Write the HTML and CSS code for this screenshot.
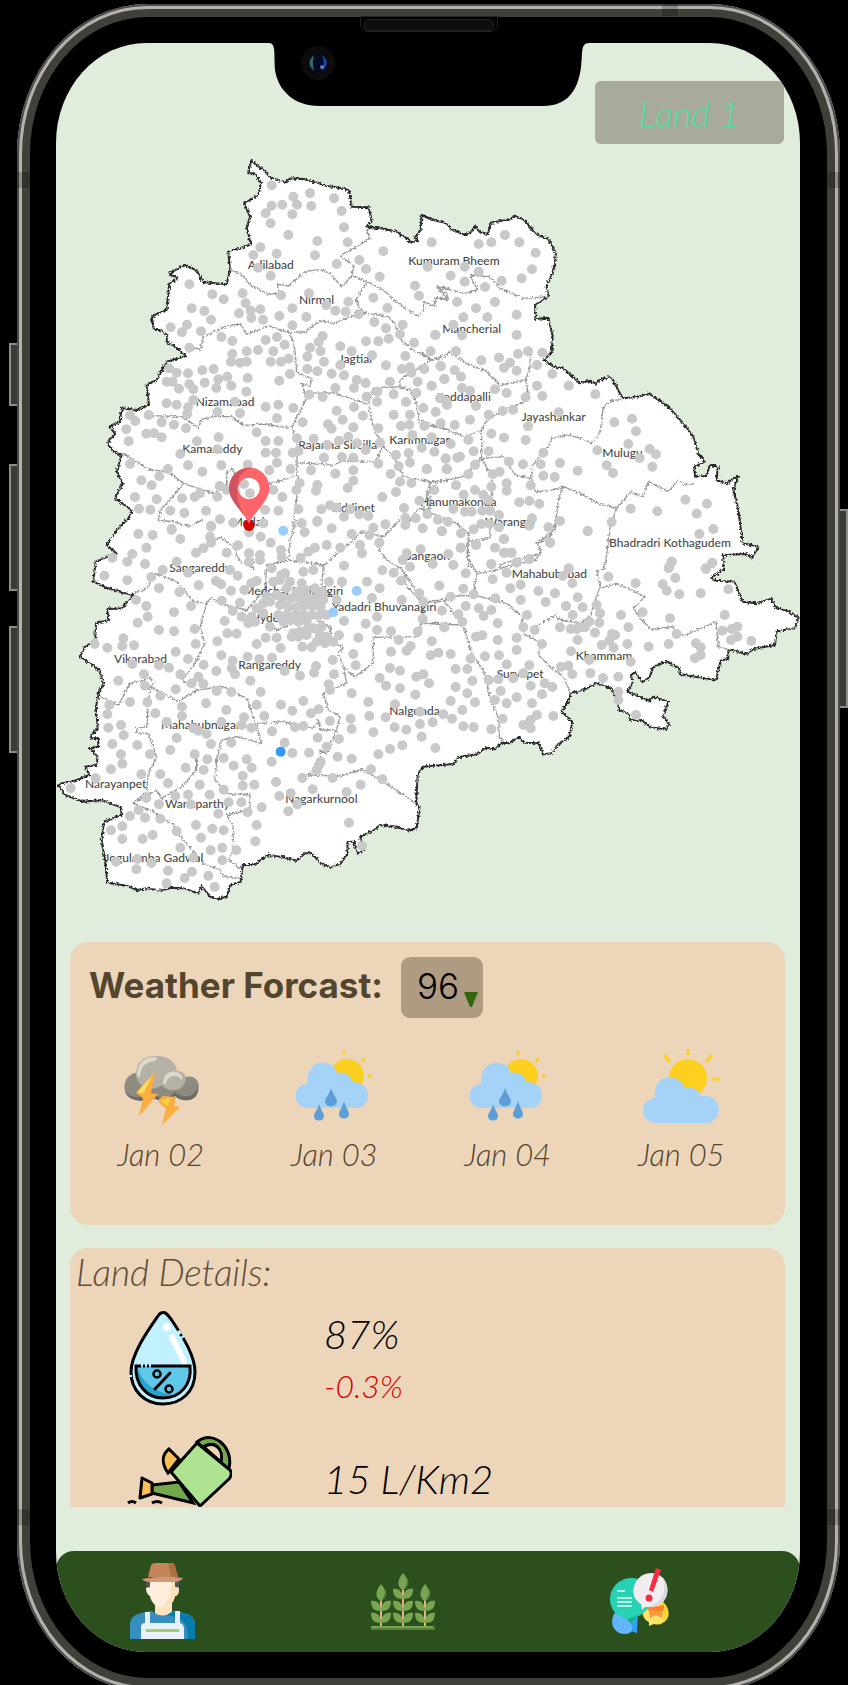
FILE: index.html
```html
<!DOCTYPE html>
<html lang="en">
<head>
<meta charset="utf-8">
<meta name="viewport" content="width=device-width, initial-scale=1">
<title>Farm land overview</title>
<link rel="stylesheet" href="styles.css">
</head>
<body>
<div class="stage">
<div class="phone">
  <span class="side-key mute"></span>
  <span class="side-key volume-up"></span>
  <span class="side-key volume-down"></span>
  <span class="side-key power"></span>
  <span class="band band-top"></span>
  <span class="band band-left"></span>
  <span class="band band-right"></span>
  <span class="band band-left-low"></span>
  <span class="band band-right-low"></span>
  <span class="speaker"></span>
  <svg class="notch" viewBox="0 0 320 65" aria-hidden="true">
    <path d="M0 0H320V1C311 1 314 12 312 25C309 49 298 64 274 64H50C26 64 9 49 6 28C5 12 7 1 0 1Z" fill="#000"/>
    <ellipse cx="49" cy="21" rx="17" ry="17" fill="#0c0c0d"/>
    <circle cx="49" cy="21" r="9" fill="#050a20"/>
    <path d="M45 13q-9 8 0 16q-2-8 0-16z" fill="#2d6a68"/>
    <path d="M53 13q9 8 0 16q4-8 0-16z" fill="#1450c8"/>
    <circle cx="53" cy="25" r="2" fill="#6c74b8"/>
  </svg>

  <main class="screen">
    <header class="top">
      <button class="land-button" type="button">Land 1</button>
    </header>

    <svg class="map" viewBox="18 0 2232 2280" role="img" aria-label="Telangana district map">
      <defs>
        <filter id="rough" x="-2%" y="-2%" width="104%" height="104%">
          <feTurbulence type="fractalNoise" baseFrequency="0.15" numOctaves="2" seed="4"/>
          <feDisplacementMap in="SourceGraphic" scale="14" xChannelSelector="R" yChannelSelector="G"/>
        </filter>
      </defs>
      <g filter="url(#rough)">
      <path class="state" d="M605 30L618 45L640 58L660 82L690 92L710 97L720 85L760 87L800 98L830 108L860 112L897 120L905 170L955 172L965 210L950 230L1000 236L1040 245L1070 265L1085 278L1103 272L1095 262L1112 240L1115 195L1150 210L1185 218L1205 238L1245 255L1262 248L1275 228L1288 245L1313 252L1323 218L1378 208L1395 198L1425 212L1455 250L1495 268L1518 310L1510 360L1490 410L1495 440L1455 465L1457 507L1495 503L1508 560L1505 605L1483 630L1510 650L1540 655L1590 700L1620 692L1635 702L1650 690L1682 680L1718 745L1765 740L1798 730L1860 775L1895 815L1930 860L1945 910L1965 935L1933 950L1935 980L1968 978L1980 945L2003 950L2000 990L2030 1000L2065 977L2050 1020L2065 1080L2078 1180L2125 1190L2105 1225L2090 1212L2020 1215L2020 1260L1985 1282L1995 1292L2053 1295L2078 1355L2120 1360L2165 1345L2175 1372L2210 1382L2246 1402L2235 1435L2180 1443L2175 1485L2110 1497L2090 1512L2035 1497L2035 1525L2012 1532L1998 1590L1890 1573L1888 1555L1850 1533L1808 1553L1800 1580L1778 1597L1755 1567L1743 1575L1748 1600L1730 1625L1798 1653L1810 1640L1855 1655L1840 1700L1858 1725L1845 1738L1800 1732L1775 1710L1740 1710L1735 1690L1708 1680L1702 1650L1685 1615L1638 1600L1600 1620L1562 1630L1555 1655L1535 1685L1567 1715L1558 1760L1525 1782L1505 1810L1480 1813L1465 1780L1425 1778L1405 1760L1380 1780L1355 1778L1335 1798L1310 1793L1280 1813L1225 1822L1210 1842L1118 1850L1103 1875L1098 1960L1108 1975L1100 2035L1070 2042L1040 2030L990 2025L970 2042L930 2060L935 2080L945 2095L925 2110L915 2090L912 2075L892 2075L893 2110L870 2143L840 2152L810 2138L785 2110L765 2110L740 2132L700 2122L655 2115L610 2145L578 2145L572 2195L540 2205L530 2240L500 2247L480 2240L455 2208L445 2230L400 2215L365 2213L330 2222L290 2215L260 2220L230 2207L172 2198L165 2130L155 2070L162 2015L215 1995L212 1972L155 1950L100 1955L45 1935L24 1903L80 1890L118 1875L105 1850L140 1845L143 1820L120 1795L145 1790L145 1765L122 1765L125 1755L143 1735L138 1670L148 1620L162 1605L150 1565L135 1550L90 1520L105 1490L135 1480L138 1420L175 1410L172 1378L215 1375L250 1335L225 1330L170 1313L130 1295L137 1235L200 1210L170 1185L190 1155L205 1135L240 1100L245 1080L195 1045L218 1000L200 965L215 915L190 905L172 880L195 850L178 830L210 815L215 775L260 780L297 765L290 705L320 690L350 635L408 618L375 590L350 575L352 555L330 540L312 540L305 500L325 490L350 480L358 400L382 385L358 370L405 345L440 362L460 397L530 403L540 360L535 305L603 283L590 235L600 200L583 160L625 135L633 100L615 70L593 70Z"/>
      <g class="district">
        <path d="M540 360L570 370L605 408L655 433L683 430L683 403L715 408L765 365L810 358L840 370L875 410L905 378L912 345L870 318L920 290L960 265L950 230M905 375L950 395L1000 420L1050 465L1105 498L1122 480L1120 455L1152 470L1158 443L1195 450L1190 430L1160 410L1200 415M950 395L918 450L930 480L950 490L1010 498L1035 520L1045 560L1085 598L1145 630L1180 625L1200 603M408 590L452 597L460 560L530 528L572 522L590 553L655 528L720 548L765 545L810 512L850 520L900 500L950 488M720 548L735 600L740 668L785 685L780 710L755 700L770 745L725 830L700 832L650 822L580 825L545 800L490 800L455 808L445 833L395 800L300 797M770 730L850 728L955 763L970 715L1050 710L1080 720L1100 760L1108 820L1200 840M1050 710L1050 690L1145 630M955 763L970 830L1000 890L1025 915L1045 940L1060 980L1140 995L1200 990M725 830L742 880L740 975L700 990L660 1000L640 1010M745 938L850 945L880 932L975 935L1000 890M215 908L260 935L300 960L355 965L400 1000L490 1030L530 1010L530 970L545 955L555 970M400 1000L360 1050L330 1080L325 1110L370 1115L420 1130L455 1110M745 975L740 1045L728 1130M1140 995L1140 1080L1105 1075L1075 1120"/>
        <g transform="translate(1110 120)"><path d="M385 320L310 325L240 295L208 260L150 255L172 300L130 310L50 290L85 330L45 325L45 350L10 335M0 485L35 510L90 488L150 525L200 545L240 585L317 570L330 530L330 485M317 570L325 610L305 640L260 655L200 690L185 720L135 740L0 690M185 720L185 805L250 800L285 855L335 865L335 830L385 770L395 745L440 735L485 745L515 760L540 730L550 650L575 632L608 628M185 805L215 860L215 930M335 865L345 905L390 902L430 890L480 910L535 940L590 955L630 908L670 920L685 875L745 905L775 870L790 885L822 880M430 890L415 930L405 1020L350 1060L365 1085L345 1110L240 1135M590 955L570 1010L558 1110L550 1140M185 805L130 860L30 880L10 960L110 1000L145 1030L145 1135M210 1005L210 1045L145 1055"/></g>
        <g transform="translate(0 1110)"><path d="M483 70L510 50L550 80L570 125L610 145L610 110M740 0L720 60L715 120L650 135L645 210L590 270L540 260L480 235L470 250L430 245L380 185L320 160L290 205L250 220M715 120L820 135L910 60L935 35L1000 50L1050 0M975 70L1010 120L1060 150L1070 200L1120 250L1180 240L1200 235M820 135L815 200L860 240M1120 250L1115 310L1105 350L970 352L970 430L915 470L880 440L865 400L880 380L845 370L840 320L780 290L680 330L650 310M1115 310L1200 310M470 250L450 320L465 370L430 440L395 480L440 510L385 545L330 515L300 500L290 620L260 625L260 640L295 640L320 710L295 760L290 815L250 850M150 530L205 555L240 490L300 475L310 490L300 505M440 510L520 500L590 535L620 620L635 670L560 650L515 660L500 720L495 780L530 820L600 825L600 870L530 885L550 920L550 990L535 1020L570 1045M620 610L700 605L790 625L805 600L810 630L860 630L870 590L835 570L820 520L890 490L880 440M440 710L440 750L395 800L335 835L320 810L250 850L310 875L370 915L400 960L460 1030L510 1050L520 1070L570 1075M860 630L830 700L810 690L815 740L770 765L870 768L935 748L1000 785L1098 850"/></g>
        <g transform="translate(1050 1110)"><path d="M0 140L70 245L130 240L150 230L220 225L320 250L365 290L370 340L425 370L415 405L450 440L490 470L512 520M130 240L170 290L190 315L215 400L250 450L270 530L297 600L298 650L310 665M190 315L60 310M405 320L465 285L480 300L540 310L570 290L600 200L590 155L615 145M600 205L650 190L735 230L700 265L720 295L755 328L815 320L850 348L948 305L955 380L990 390M205 65L200 110L230 160L220 225M230 160L290 150L310 130L420 100L415 70L450 50L470 0"/></g>
      </g>
      </g>
      <g class="place">
        <text x="593" y="356">Adilabad</text><text x="747" y="463">Nirmal</text><text x="1075" y="344">Kumuram Bheem</text><text x="1177" y="548">Mancherial</text><text x="866" y="640">Jagtial</text><text x="437" y="769">Nizamabad</text><text x="1160" y="753">Peddapalli</text><text x="1415" y="814">Jayashankar</text><text x="397" y="910">Kamareddy</text><text x="745" y="896">Rajanna Sircilla</text><text x="1018" y="882">Karimnagar</text><text x="1657" y="922">Mulugu</text><text x="845" y="1087">Siddipet</text><text x="1110" y="1069">Hanumakonda</text><text x="1305" y="1128">Warangal</text><text x="545" y="1129">Medak</text><text x="1677" y="1192">Bhadradri Kothagudem</text><text x="358" y="1265">Sangareddy</text><text x="1070" y="1230">Jangaon</text><text x="1385" y="1283">Mahabubabad</text><text x="580" y="1335">Medchal Malkajgiri</text><text x="846" y="1383">Yadadri Bhuvanagiri</text><text x="603" y="1417">Hyderabad</text><text x="192" y="1538">Vikarabad</text><text x="565" y="1557">Rangareddy</text><text x="1018" y="1696">Nalgonda</text><text x="1340" y="1585">Suryapet</text><text x="1577" y="1530">Khammam</text><text x="333" y="1738">Mahabubnagar</text><text x="105" y="1915">Narayanpet</text><text x="345" y="1973">Wanaparthy</text><text x="706" y="1960">Nagarkurnool</text><text x="163" y="2137">Jogulamba Gadwal</text>
      </g>
      <g class="stations">
        <path d="M665 106h0M730 140h0M780 130h0M852 145h0M665 167h0M697 164h0M741 164h0M784 168h0M875 183h0M647 190h0M727 193h0M662 220h0M882 232h0M715 255h0M802 273h0M893 277h0M631 292h0M680 311h0M610 315h0M795 316h0M624 353h0M860 342h0M662 377h0M1000 304h0M928 330h0M948 357h0M989 380h0M1145 277h0M1133 350h0M1095 407h0M1107 437h0M970 443h0M1012 474h0M418 403h0M487 433h0M521 448h0M578 430h0M587 460h0M425 475h0M463 483h0M483 509h0M411 524h0M362 532h0M396 547h0M453 544h0M567 490h0M602 482h0M631 478h0M604 504h0M639 509h0M688 498h0M693 436h0M777 430h0M727 475h0M769 501h0M727 526h0M829 466h0M856 482h0M887 485h0M895 455h0M926 493h0M973 516h0M1008 535h0M1058 524h0M1050 553h0M1016 566h0M985 574h0M948 574h0M1092 578h0M1156 555h0M1142 604h0M1066 618h0M514 561h0M547 573h0M647 570h0M681 561h0M704 584h0M590 604h0M624 600h0M547 612h0M670 604h0M543 635h0M570 638h0M590 635h0M662 635h0M693 635h0M716 626h0M418 593h0M818 558h0M806 576h0M780 593h0M812 604h0M772 620h0M822 635h0M871 589h0M905 604h0M966 616h0M871 645h0M1008 646h0M772 657h0M802 664h0M845 671h0M882 676h0M720 672h0M357 655h0M380 668h0M414 670h0M457 661h0M491 657h0M350 695h0M368 695h0M387 716h0M418 703h0M430 718h0M464 698h0M505 688h0M532 680h0M499 714h0M544 707h0M593 684h0M589 725h0M688 692h0M856 714h0M920 690h0M947 699h0M912 714h0M1020 695h0M1056 657h0M1080 652h0M1084 668h0M1123 657h0M1172 649h0M1103 695h0M1145 707h0M1183 688h0M350 760h0M380 764h0M430 750h0M414 772h0M412 792h0M555 755h0M502 786h0M570 790h0M647 771h0M685 764h0M681 805h0M730 774h0M778 734h0M818 741h0M950 740h0M982 725h0M981 755h0M1031 733h0M1099 729h0M912 771h0M860 782h0M939 797h0M878 809h0M910 832h0M758 817h0M834 823h0M845 836h0M1068 756h0M1031 794h0M1080 794h0M1120 774h0M1157 786h0M1172 744h0M1190 756h0M1053 828h0M1078 824h0M1123 828h0M1172 820h0M240 795h0M256 813h0M296 795h0M229 838h0M335 817h0M372 824h0M408 835h0M236 874h0M289 851h0M312 850h0M335 862h0M441 874h0M506 862h0M620 847h0M647 873h0M685 873h0M741 865h0M791 866h0M985 835h0M895 860h0M867 872h0M832 885h0M921 880h0M947 900h0M990 878h0M1087 855h0M1145 862h0M1115 893h0M1153 905h0M391 912h0M414 946h0M502 898h0M647 908h0M678 908h0M728 908h0M745 904h0M681 938h0M593 944h0M514 946h0M457 965h0M354 957h0M328 979h0M274 991h0M305 1006h0M240 942h0M822 923h0M876 921h0M910 923h0M985 941h0M1038 915h0M1076 909h0M1080 938h0M1046 949h0M783 961h0M910 961h0M856 971h0M910 992h0M893 1014h0M1022 972h0M1131 957h0M1187 925h0M1190 957h0M658 961h0M722 957h0M749 999h0M739 1020h0M802 1005h0M798 1022h0M670 1020h0M697 1041h0M255 1041h0M320 1048h0M267 1076h0M301 1079h0M361 1082h0M403 1089h0M468 1082h0M396 1045h0M434 1041h0M450 1030h0M502 1040h0M509 1008h0M530 1020h0M685 1082h0M645 1080h0M745 1078h0M814 1078h0M840 1066h0M860 1073h0M901 1078h0M928 1093h0M955 1098h0M882 1100h0M802 1113h0M997 1041h0M1038 1026h0M1050 995h0M1084 999h0M1062 1074h0M1108 1052h0M1153 1020h0M1097 1105h0M1066 1103h0M1132 1093h0M1164 1109h0M1006 1123h0M970 1133h0M510 1108h0M483 1127h0M550 1118h0M640 1120h0M365 1137h0M755 1120h0M582 1002h0M600 1030h0"/>
        <g transform="translate(1110 120)"><path d="M176 162h0M214 157h0M255 135h0M298 157h0M347 188h0M336 238h0M305 265h0M245 272h0M176 245h0M134 230h0M92 257h0M134 275h0M195 291h0M111 336h0M225 336h0M168 355h0M130 382h0M202 382h0M290 374h0M100 404h0M126 436h0M290 435h0M108 484h0M184 511h0M237 503h0M270 518h0M252 533h0M290 542h0M294 492h0M324 484h0M367 488h0M351 525h0M397 552h0M351 587h0M446 587h0M367 618h0M317 622h0M526 613h0M260 609h0M225 598h0M150 602h0M126 594h0M123 560h0M104 541h0M62 529h0M73 567h0M35 587h0M46 435h0M60 625h0M81 645h0M168 648h0M206 674h0M248 663h0M279 659h0M150 689h0M104 705h0M416 667h0M324 709h0M317 750h0M252 743h0M214 731h0M145 750h0M92 762h0M161 784h0M206 784h0M120 800h0M112 803h0M77 807h0M81 838h0M20 838h0M267 815h0M309 823h0M370 788h0M362 823h0M420 819h0M404 861h0M370 857h0M473 842h0M532 781h0M583 697h0M636 686h0M648 724h0M625 762h0M659 804h0M689 777h0M708 793h0M697 830h0M560 826h0M579 849h0M165 825h0M145 853h0M218 853h0M239 845h0M260 880h0M214 890h0M260 902h0M332 886h0M108 886h0M165 900h0M131 914h0M190 915h0M205 930h0M298 937h0M328 933h0M358 941h0M100 957h0M135 965h0M155 965h0M187 962h0M210 962h0M237 975h0M336 985h0M420 993h0M385 1012h0M328 1007h0M184 1002h0M209 1002h0M237 1012h0M84 995h0M66 1024h0M123 1030h0M161 1018h0M252 1047h0M168 1065h0M225 1073h0M252 1088h0M274 1088h0M123 1073h0M390 1058h0M503 1024h0M575 996h0M632 956h0M712 964h0M796 929h0M861 941h0M830 971h0M880 1017h0M838 1032h0M755 1115h0M747 1132h0M876 1120h0M857 1135h0M214 1123h0M290 1117h0M328 1107h0M446 1135h0"/></g>
        <g transform="translate(0 1110)"><path d="M265 42h0M308 45h0M365 30h0M391 57h0M289 83h0M247 102h0M232 125h0M187 114h0M285 132h0M163 167h0M232 181h0M304 171h0M338 150h0M380 125h0M414 158h0M327 205h0M388 216h0M446 196h0M483 20h0M480 50h0M483 68h0M460 85h0M438 98h0M530 98h0M564 76h0M632 50h0M662 68h0M693 90h0M597 37h0M597 125h0M630 105h0M695 110h0M597 100h0M630 120h0M665 145h0M694 165h0M540 150h0M563 167h0M498 183h0M514 193h0M543 212h0M515 242h0M570 248h0M583 210h0M604 190h0M620 183h0M258 240h0M289 258h0M293 290h0M263 308h0M372 277h0M423 258h0M327 330h0M372 334h0M434 327h0M524 303h0M548 273h0M575 290h0M595 310h0M220 355h0M217 378h0M252 376h0M134 372h0M172 383h0M437 372h0M502 364h0M532 340h0M560 341h0M620 372h0M647 353h0M680 353h0M377 395h0M414 417h0M247 432h0M327 436h0M357 443h0M461 434h0M499 453h0M514 406h0M548 422h0M545 445h0M555 463h0M593 410h0M628 417h0M666 413h0M692 384h0M704 453h0M282 463h0M285 497h0M205 482h0M391 463h0M445 470h0M425 490h0M460 492h0M377 508h0M331 527h0M292 547h0M240 546h0M500 513h0M544 516h0M601 482h0M632 516h0M178 555h0M172 583h0M316 580h0M396 560h0M396 588h0M468 550h0M529 570h0M582 592h0M350 606h0M514 606h0M175 623h0M213 615h0M221 646h0M604 623h0M575 615h0M430 625h0M445 632h0M470 642h0M620 554h0M643 588h0M693 554h0M187 672h0M262 675h0M361 690h0M380 654h0M483 672h0M544 668h0M213 703h0M217 731h0M300 703h0M434 703h0M472 718h0M461 750h0M521 714h0M407 743h0M183 748h0M274 763h0M331 763h0M137 775h0M354 790h0M62 805h0M449 794h0M551 737h0M590 718h0M605 743h0M578 767h0M578 797h0M613 794h0M665 725h0M704 668h0M727 699h0M777 698h0M666 634h0M735 622h0M760 618h0M688 828h0M722 820h0M678 786h0M757 774h0M788 808h0M848 774h0M807 735h0M800 750h0M812 725h0M830 680h0M803 653h0M289 834h0M327 853h0M376 828h0M414 824h0M479 824h0M422 853h0M521 809h0M536 847h0M574 847h0M593 877h0M505 881h0M635 862h0M715 874h0M742 853h0M266 870h0M240 888h0M285 893h0M331 896h0M380 934h0M183 931h0M217 919h0M217 957h0M278 957h0M308 945h0M438 915h0M487 926h0M521 931h0M453 953h0M391 983h0M482 991h0M517 983h0M559 991h0M517 1021h0M620 915h0M616 964h0M262 1017h0M198 1025h0M304 1029h0M430 1013h0M259 1048h0M354 1052h0M426 1055h0M404 1074h0M475 1067h0M350 1090h0M494 1101h0M936 978h0M897 908h0M932 794h0M890 816h0M997 778h0M963 748h0M905 716h0M863 710h0M867 657h0M840 603h0M905 627h0M902 596h0M970 637h0M985 703h0M1020 687h0M1057 676h0M1115 650h0M1156 684h0M1110 612h0M1148 607h0M1069 629h0M1034 622h0M1007 592h0M958 588h0M955 546h0M905 520h0M840 510h0M836 493h0M852 463h0M917 436h0M910 402h0M848 420h0M750 467h0M792 458h0M798 438h0M760 543h0M727 572h0M783 580h0M806 568h0M989 474h0M1008 497h0M1050 505h0M1096 524h0M1137 490h0M1120 463h0M1099 470h0M1050 452h0M1020 444h0M1023 395h0M1035 553h0M1110 575h0M925 353h0M867 346h0M882 303h0M947 311h0M981 290h0M981 330h0M1023 334h0M1046 360h0M1103 335h0M1118 297h0M1070 392h0M1082 378h0M1145 364h0M1142 406h0M1165 398h0M1183 322h0M989 205h0M966 234h0M951 185h0M997 151h0M1031 158h0M1053 182h0M1055 240h0M1108 220h0M1120 245h0M876 185h0M837 185h0M860 240h0M882 137h0M930 75h0M936 100h0M988 68h0M958 45h0M905 42h0M871 83h0M830 75h0M795 83h0M775 95h0M752 113h0M764 37h0M802 5h0M845 25h0M1066 15h0M1118 25h0M1175 33h0M1070 100h0M1112 88h0M1058 120h0M1080 140h0M1148 132h0M1168 197h0M1176 272h0M760 155h0M790 150h0M690 180h0M670 185h0M705 160h0M720 185h0M755 190h0M710 205h0M740 215h0M765 210h0M795 205h0M815 215h0M650 230h0M680 225h0M700 235h0M725 235h0M750 235h0M775 235h0M800 235h0M820 240h0M640 250h0M660 245h0M690 255h0M715 260h0M740 262h0M765 258h0M790 258h0M812 262h0M830 285h0M620 265h0M640 280h0M605 290h0M615 305h0M685 285h0M710 285h0M735 285h0M760 285h0M785 285h0M810 285h0M700 305h0M720 300h0M745 305h0M770 305h0M660 320h0M730 340h0M750 335h0M770 330h0M790 325h0M815 320h0M725 350h0M745 350h0M770 345h0M810 345h0M830 350h0M800 365h0M825 370h0M850 365h0M757 380h0M785 382h0"/></g>
        <g transform="translate(1050 1110)"><path d="M145 102h0M160 135h0M197 160h0M182 83h0M228 75h0M312 57h0M315 98h0M335 98h0M274 132h0M350 128h0M388 118h0M320 158h0M278 178h0M331 205h0M362 194h0M190 206h0M152 230h0M221 223h0M286 235h0M362 240h0M415 213h0M465 220h0M437 246h0M488 168h0M506 147h0M517 190h0M533 232h0M498 258h0M548 262h0M518 285h0M590 255h0M600 280h0M598 308h0M381 285h0M568 305h0M555 322h0M540 322h0M530 327h0M512 327h0M480 322h0M404 330h0M370 322h0M585 338h0M625 170h0M663 285h0M707 190h0M728 277h0M815 125h0M806 145h0M826 174h0M788 193h0M800 212h0M838 223h0M902 220h0M937 128h0M918 147h0M563 33h0M450 68h0M985 208h0M974 285h0M810 295h0M1012 320h0M995 327h0M967 332h0M1012 350h0M993 360h0M1054 363h0M830 342h0M806 372h0M888 370h0M902 382h0M902 405h0M885 415h0M746 380h0M682 372h0M685 322h0M636 342h0M645 345h0M628 362h0M605 375h0M641 383h0M533 360h0M513 394h0M426 372h0M350 353h0M350 390h0M293 310h0M293 360h0M228 350h0M247 346h0M236 265h0M251 288h0M274 270h0M197 258h0M175 283h0M187 305h0M133 322h0M152 402h0M212 416h0M255 409h0M297 406h0M320 433h0M388 436h0M167 447h0M202 447h0M217 482h0M167 501h0M202 520h0M302 513h0M266 480h0M340 475h0M295 478h0M370 460h0M392 497h0M434 490h0M457 501h0M350 532h0M426 523h0M320 550h0M285 540h0M225 547h0M396 550h0M152 543h0M187 570h0M156 596h0M130 583h0M190 619h0M221 622h0M274 628h0M308 596h0M411 585h0M392 600h0M392 625h0M370 615h0M460 588h0M483 440h0M505 437h0M517 463h0M571 460h0M609 474h0M655 470h0M692 425h0M568 420h0M655 515h0M655 540h0M708 585h0"/></g>
        <path class="light" d="M700 1142h0M920 1323h0M850 1387h0"/>
        <path class="blue" d="M692 1805h0"/>
        <path class="red" d="M597 1126h0"/>
      </g>
      <g class="pin">
        <path fill="#ff646a" fill-rule="evenodd" d="M597 1122C582 1085 537 1055 537 1014A60 61 0 0 1 658 1014C658 1055 612 1085 597 1122ZM597 983A32 32 0 1 0 597 1047A32 32 0 1 0 597 983Z"/>
        <path fill="#d1535f" d="M597 1122C582 1085 537 1055 537 1014A60 61 0 0 1 603 954C580 962 568 976 563 1000C555 1045 572 1080 597 1122Z"/>
      </g>
    </svg>

    <section class="card weather">
      <div class="weather-head">
        <h1>Weather Forcast:</h1>
        <button class="score" type="button">96<svg class="fall" viewBox="0 0 14 15" aria-hidden="true"><path d="M0 0H14L8 15H6Z" fill="#33650c"/></svg></button>
      </div>
      <ul class="days">
        <li>
          <svg viewBox="0 0 76 76" aria-hidden="true">
            <path fill="#8f8b80" d="M12 24C-2 27-3 50 14 51C22 52 25 47 31 49C37 54 46 51 52 46C58 53 69 54 74 45C79 34 73 25 62 28Z"/>
            <path fill="#706b62" d="M2 42C7 50 20 50 27 43C36 51 46 50 52 43C62 51 72 48 75 37C76 46 71 52 63 51C58 51 55 50 52 47C46 53 36 52 30 49C21 54 6 53 2 42Z"/>
            <path fill="#b5b1a5" d="M13 27C13 12 22 6 34 7C46 7 53 14 54 22C65 22 65 34 58 39C51 43 42 41 39 36C29 44 15 38 13 27Z"/>
            <path fill="#dbd8cd" d="M14 27C14 14 22 7 33 8C36 12 29 12 25 14C18 17 18 22 17 28ZM40 35C40 25 48 20 56 24C60 26 60 31 58 31C55 24 44 26 43 35Z"/>
            <path fill="#ffad3f" d="M31 24L32 25L28 44L35 45L16 67L20 49L13 44Z"/><path fill="#ffdc55" d="M30 26L14 43L20 45Z"/>
            <path fill="#ffad3f" d="M36 50L40 47L53 48L51 57L57 58L39 76L43 60L36 54Z"/><path fill="#ffd044" d="M37 52L48 48L44 57Z"/>
          </svg>
          <span>Jan 02</span>
        </li>
        <li>
          <svg viewBox="0 0 76 76" aria-hidden="true">
            <g id="rain">
              <path d="M48 2V6M69 9L66 13M72 27H76" stroke="#fdcf1e" stroke-width="2.5"/>
              <circle cx="51" cy="27" r="17" fill="#fdcf1e"/>
              <path fill="#a4d3f7" d="M12 59A12 12 0 0 1 11 35C10 8 37 9 41 24C49 22 55 27 56 33C77 32 76 59 60 59Z"/>
              <path fill="#5d9ed7" d="M35 39C38 47 41 50 41 52C41 59 29 59 29 52C29 50 33 46 35 39ZM23 55C25 61 28 64 28 67C28 73 18 73 18 67C18 64 21 62 23 55ZM48 52C50 59 53 62 53 65C53 71 43 71 43 65C43 62 46 59 48 52Z"/>
            </g>
          </svg>
          <span>Jan 03</span>
        </li>
        <li>
          <svg viewBox="0 0 76 76" aria-hidden="true"><use href="#rain"/></svg>
          <span>Jan 04</span>
        </li>
        <li>
          <svg viewBox="0 0 76 76" aria-hidden="true">
            <path d="M45 0V6M21 6L27 13M69 6L63 13M69 30H76" stroke="#fdcf1e" stroke-width="3"/>
            <circle cx="45" cy="29" r="19" fill="#fdcf1e"/>
            <path fill="#a4d3f7" d="M15 74C-5 74-4 50 12 49C9 24 36 23 42 39C50 37 57 42 57 47C82 44 80 74 63 74Z"/>
          </svg>
          <span>Jan 05</span>
        </li>
      </ul>
    </section>

    <section class="card details">
      <h2>Land Details:</h2>
      <div class="metric">
        <svg class="drop" viewBox="0 0 68 95" aria-hidden="true">
          <path fill="#c1f1ff" stroke="#000" stroke-width="3" d="M34 1.500C37 1 40 5 44 11C56 29 66 46 66 61C66 81 52 93 34 93C16 93 2 80 2 61C2 43 20 18 29 5C31 2 32 1.500 34 1.500Z"/>
          <path fill="#5fc8e8" d="M7 55H61C63 74 51 87 34 87C17 87 6 73 7 55Z"/>
          <path fill="#2ba3cb" d="M9 58C14 73 27 82 46 84C31 90 5 83 9 58Z"/>
          <path fill="none" stroke="#000" stroke-width="3" d="M22 55H61C63 74 51 87 34 87C17 87 6 73 7 55H12"/>
          <path d="M14 55H16M18 55H20" stroke="#000" stroke-width="3"/>
          <path d="M26 78L41 62" stroke="#000" stroke-width="3" stroke-linecap="round"/>
          <circle cx="28" cy="63" r="3.500" fill="none" stroke="#000" stroke-width="2.500"/><circle cx="40" cy="78" r="3.500" fill="none" stroke="#000" stroke-width="2.500"/>
          <circle cx="38" cy="16" r="4" fill="#fff"/><path d="M43 26L55 50" stroke="#fff" stroke-width="6" stroke-linecap="round"/>
          <path d="M49 20L54 27" stroke="#c1f1ff" stroke-width="4"/><circle cx="52" cy="24" r="1.500"/>
          <path d="M0 65H3" stroke="#c1f1ff" stroke-width="2"/>
        </svg>
        <p class="values"><span>87%</span><span class="change">-0.3%</span></p>
      </div>
      <div class="metric">
        <svg class="can" viewBox="0 0 106 90" aria-hidden="true">
          <path fill="#72a94f" stroke="#000" stroke-width="3" d="M71 8C87-5 108 13 103 34L97 37L92 27C98 12 88 7 76 13Z"/>
          <path fill="#ecd5b9" stroke="#000" stroke-width="3" d="M78 13C88 6 98 15 95 28Z"/>
          <path fill="#ffbd55" stroke="#000" stroke-width="3" d="M43 15L53 25L42 39C36 30 35 21 43 15Z"/>
          <path fill="#72a94f" stroke="#000" stroke-width="3" d="M26 51L53 48L67 69L26 59Z"/>
          <path fill="#ffbd55" stroke="#000" stroke-width="3" stroke-linejoin="round" d="M16 44L26 49V60L14 64Z"/>
          <path fill="#aee491" stroke="#000" stroke-width="3" stroke-linejoin="round" d="M71 9L104 36Q107 40 103 45L74 72L45 38Z"/>
          <path d="M2 69Q6 66 10 69M26 69Q31 66 36 69" fill="none" stroke="#000" stroke-width="3"/>
        </svg>
        <p class="values"><span>15 L/Km2</span></p>
      </div>
    </section>

    <nav class="tabs" aria-label="Main">
      <a href="#profile" aria-label="Profile">
        <svg width="66" height="76" viewBox="0 0 66 76" aria-hidden="true">
          <path fill="#fee2c0" d="M25 40H42V53H25Z"/>
          <path fill="#368fbe" d="M0 76V62C0 52 8 50 22 48Q33 57 43 48C58 50 65 52 65 62V76Z"/>
          <path fill="#087dad" d="M43 48C58 50 65 52 65 62V76H58C58 59 53 55 37 52Z"/>
          <path fill="#52545e" d="M16 17H49V26H16Z"/>
          <path fill="#ffeedb" d="M20 17H45V24L49 25Q49 33 45 33C44 40 38 45 33 45C27 45 21 40 20 33Q16 31 16 25L20 24Z"/>
          <path fill="#ffe0bb" d="M41 18H45V24L49 25Q49 33 45 33C44 40 38 44 32 44C41 38 41 28 41 18Z"/>
          <path fill="#c4855b" d="M21 2Q22 0 26 0H40Q44 0 45 3L48 14H18Z"/>
          <path fill="#ad6e42" d="M38 0H42Q45 0 45 3L48 14H41Z"/>
          <path fill="#d29979" d="M12 16Q33 12 53 15Q50 19 44 19H21Q14 19 12 16Z"/>
          <path fill="#e9f1fd" d="M15 49H20V60H45V48H50V60Q54 61 54 66V76H11V64Q11 60 15 60Z"/>
          <path d="M17 67.500H48" stroke="#a2ce6c" stroke-width="3" stroke-linecap="round"/>
        </svg>
      </a>
      <a href="#crops" aria-label="Crops">
        <svg width="64" height="58" viewBox="0 0 64 58" aria-hidden="true">
          <path d="M10 26V54M32 16V54M54 26V54" stroke="#efae8a" stroke-width="2"/>
          <g fill="#78a650"><path id="bud" d="M10 12C17 20 15 27 10 29C5 27 3 20 10 12Z"/><use href="#bud" x="44"/><path d="M32 1C39 9 37 16 32 18C27 16 25 9 32 1Z"/>
          <path id="leaf" d="M0 29C7 28 10 33 10 39C3 39 0 36 0 29ZM20 29C13 28 10 33 10 39C17 39 20 36 20 29Z"/>
          <use href="#leaf" y="12"/><use href="#leaf" x="22"/><use href="#leaf" x="22" y="12"/><use href="#leaf" x="22" y="-12"/><use href="#leaf" x="44"/><use href="#leaf" x="44" y="12"/></g>
          <path fill="#507a3c" d="M14 16C17 22 15 27 10 29C14 24 14 21 14 16ZM58 16C61 22 59 27 54 29C58 24 58 21 58 16ZM36 5C39 11 37 16 32 18C36 13 36 10 36 5Z"/>
          <rect y="54" width="64" height="4" rx="1" fill="#56813d"/><rect y="54" width="62" height="2" rx="1" fill="#78a650"/>
        </svg>
      </a>
      <a href="#messages" aria-label="Messages">
        <svg width="60" height="67" viewBox="0 0 60 67" aria-hidden="true">
          <path fill="#64b5ff" d="M8 41C-2 50 1 66 15 66Q20 66 22 63L27 65V46Z"/><path fill="#31a3fb" d="M7 42H28L27 65L22 63C23 53 17 50 5 45Z"/>
          <path fill="#ffd62e" d="M49 31C61 38 62 51 51 56Q48 57 44 56L39 58V54C32 51 32 44 32 41Z"/><path fill="#ffe56b" d="M34 43L52 39Q58 50 50 55Q46 57 43 55L39 58V54C34 51 34 47 34 43Z"/>
          <path fill="#ff9a40" d="M38 38L54 39L52 50L46 47L40 50Z"/><path fill="#ff8427" d="M37 40L54 37V42Q48 44 38 42Z"/>
          <path fill="#27d1b4" d="M20 10C45 8 48 40 27 49L21 56L17 51C-8 46-4 12 20 10Z"/><path fill="#20aa98" d="M21 56L17 51Q36 46 40 38Q35 45 27 49Z"/>
          <path fill="#f0eef1" d="M41 5C63 5 63 39 41 39H35L32 42L31 36C16 27 25 5 41 5Z"/><path fill="#d9d7df" d="M54 12C63 25 53 40 36 39C51 36 56 27 54 12Z"/>
          <path d="M7 23H15M7 30H22M7 34H22M7 38H22" stroke="#baf1e6" stroke-width="2"/>
          <path fill="#fb2a43" d="M46 0L51 2L43 24L39 22Z"/><circle cx="39" cy="30" r="3.500" fill="#fb2a43"/>
        </svg>
      </a>
    </nav>
  </main>
</div>
</div>
</body>
</html>
```
FILE: styles.css
```css
* { box-sizing: border-box; }

body {
  margin: 0;
  background: #000;
  color: #000;
  font-family: Lato, "Open Sans", sans-serif;
}

.stage {
  height: 100vh;
  overflow: hidden;
}

/* Handset */
.phone {
  position: relative;
  margin: 4px 8px 0 17px;
  padding: 39px 40px 39px 39px;
  border-radius: 130px / 150px;
  background: #000;
  box-shadow: inset 0 0 0 2px #4a4a48, inset 0 0 0 5px #b4b1ac, inset 0 0 0 13px #403f3a;
}

.side-key {
  position: absolute;
  left: -8px;
  width: 8px;
  border: 2px solid #8e8c89;
  border-right: 0;
  background: #3b3a37;
}
.mute { top: 339px; height: 63px; }
.volume-up { top: 460px; height: 127px; }
.volume-down { top: 622px; height: 127px; }
.power {
  top: 505px;
  left: auto;
  right: -8px;
  height: 199px;
  border: 2px solid #8e8c89;
  border-left: 0;
}

.band { position: absolute; background: rgba(0, 0, 0, .2); }
.band-top { top: 0; right: 162px; width: 16px; height: 12px; }
.band-left, .band-left-low { left: 0; width: 13px; height: 16px; }
.band-right, .band-right-low { right: 0; width: 13px; height: 16px; }
.band-left, .band-right { top: 168px; }
.band-left-low, .band-right-low { top: 1505px; }

.speaker {
  position: absolute;
  top: 12px;
  left: calc(50% - 69px);
  width: 138px;
  height: 16px;
  border: 1px solid #222;
  border-radius: 0 0 8px 8px;
  background: #000;
}
.speaker::after {
  content: "";
  display: block;
  height: 10px;
  margin: 2px 3px;
  border: 1px solid #242424;
  border-radius: 5px;
  background: #0e0e0e;
}

.notch {
  position: absolute;
  z-index: 1;
  top: 38px;
  left: calc(50% - 160px);
  width: 320px;
  height: 65px;
}

/* Screen */
.screen {
  display: flex;
  flex-direction: column;
  overflow: hidden;
  border-radius: 90px / 100px;
  background: #e0ecdc;
}

.top {
  display: flex;
  justify-content: flex-end;
  padding: 38px 16px 6px;
}

.land-button {
  width: 189px;
  height: 63px;
  border: 0;
  border-radius: 6px;
  background: #a8aa9b;
  color: #4fe09b;
  font: italic 300 36px Lato, sans-serif;
}

.map { display: block; width: 100%; height: auto; }
.state { fill: #fff; stroke: #2b2b2b; stroke-width: 6; stroke-linejoin: round; }
.district { fill: none; stroke: #999; stroke-width: 4; stroke-linejoin: round; }
.place { fill: #4a4a4a; font-family: Lato, sans-serif; font-size: 36px; font-weight: 500; }
.stations { fill: none; stroke: #c9c9c9; stroke-width: 30; stroke-linecap: round; }
.light { stroke: #99ccff; }
.blue { stroke: #3399ff; }
.red { stroke: #d40000; stroke-width: 34; }

.card {
  margin: 0 15px 0 14px;
  border-radius: 18px;
  background: #ecd5b9;
}

.weather { margin-top: 32px; padding: 15px 14px 52px; }

.weather-head { display: flex; align-items: flex-start; gap: 18px; padding-left: 5px; }

h1 {
  margin: 0;
  color: #54452f;
  font: 700 35px/56px Inter, sans-serif;
}

.score {
  position: relative;
  width: 82px;
  height: 61px;
  padding: 0 8px 4px 0;
  border: 0;
  border-radius: 9px;
  background: #ae9b82;
  font: 300 35px Inter, sans-serif;
}
.fall { position: absolute; right: 5px; bottom: 11px; width: 14px; height: 15px; }

.days {
  display: grid;
  grid-template-columns: repeat(4, 1fr);
  margin: 31px 3px 0 -10px;
  padding: 0;
  list-style: none;
}
.days li { display: flex; flex-direction: column; align-items: center; gap: 10px; }
.days svg { width: 76px; height: 76px; }
.days span { color: #54452f; font: italic 300 31px/38px Lato, sans-serif; }

.details {
  height: 259px;
  margin-top: 23px;
  overflow: hidden;
  border-radius: 18px 18px 0 0;
}

h2 {
  margin: 0 0 14px;
  padding-left: 6px;
  color: #5e4e3c;
  font: italic 300 37px/48px Lato, sans-serif;
}

.metric {
  display: grid;
  grid-template-columns: 198px 1fr;
  align-items: center;
  margin-bottom: 28px;
  padding-left: 56px;
}
.drop { width: 68px; height: 95px; margin-left: 3px; }
.can { width: 106px; height: 90px; }

.values {
  display: flex;
  flex-direction: column;
  gap: 8px;
  margin: 0;
  font: italic 300 40px/48px Lato, sans-serif;
}
.change { color: #d90000; font-size: 32px; line-height: 40px; }

.tabs {
  display: flex;
  justify-content: space-between;
  align-items: center;
  margin-top: 44px;
  padding: 12px 130px 12px 74px;
  border-radius: 18px 18px 0 0;
  background: #2c4f1e;
}
.tabs a { display: flex; padding-bottom: 1px; }
```
